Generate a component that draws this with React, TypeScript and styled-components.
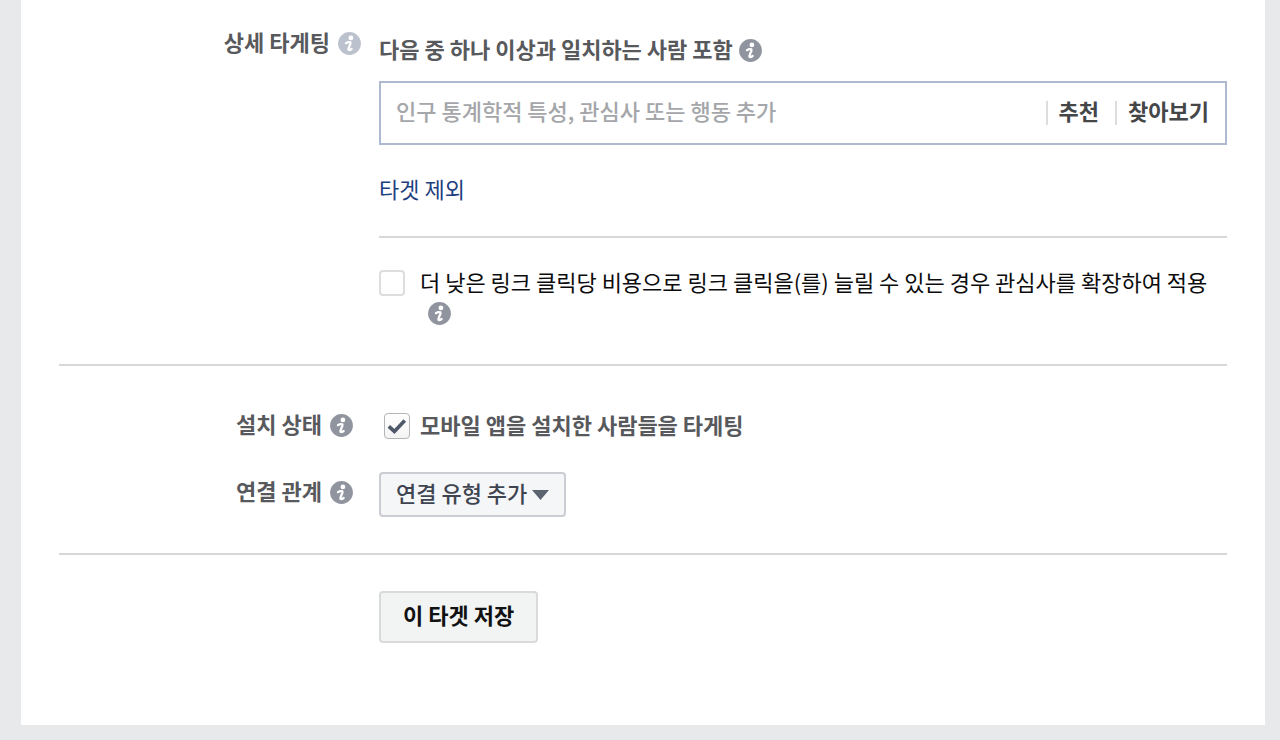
import React from "react";
import styled, { createGlobalStyle, css } from "styled-components";

const GlobalStyle = createGlobalStyle`
  * {
    box-sizing: border-box;
  }
  body {
    margin: 0;
    background: #e8e9eb;
    color: #58595c;
    font-family: "Noto Sans CJK KR", sans-serif;
    font-size: 22px;
    line-height: 30px;
  }
  button, input, select {
    font: inherit;
  }
`;

const Page = styled.div`
  padding: 0 15px 15px 21px;
`;

const Card = styled.form`
  padding: 28px 38px 82px;
  background: #fff;
`;

const Row = styled.div`
  display: grid;
  grid-template-columns: 302px minmax(0, 1fr);
  column-gap: 18px;
`;

const Section = styled.section`
  display: flex;
  flex-direction: column;
`;

const StatusSection = styled(Section)`
  gap: 31px;
  padding: 44px 0 36px;
`;

const RowLabel = styled.div<{ $inset?: boolean; $drop?: boolean }>`
  display: flex;
  justify-content: flex-end;
  align-items: center;
  align-self: start;
  gap: 8px;
  height: 30px;
  margin-top: ${(p) => (p.$drop ? "5px" : "0")};
  padding-right: ${(p) => (p.$inset ? "8px" : "0")};
  font-weight: 700;
`;

const Label = styled.label`
  display: block;
  padding-bottom: 4px;
  line-height: 26px;
`;

const Heading = styled.div`
  display: flex;
  align-items: center;
  gap: 6px;
  padding-top: 7px;
  font-weight: 700;
`;

const Divider = styled.hr`
  width: 100%;
  height: 2px;
  margin: 0;
  border: 0;
  background: #d6d7d9;
`;

const InfoButton = styled.button<{ $muted?: boolean }>`
  flex: none;
  display: inline-flex;
  padding: 0;
  border: 0;
  background: none;
  color: ${(p) => (p.$muted ? "#bcc2cd" : "#90949e")};
  cursor: pointer;
`;

const SearchBox = styled.div`
  display: flex;
  align-items: center;
  height: 64px;
  margin-top: 16px;
  padding: 0 5px 0 15px;
  border: 2px solid #adbad2;
`;

const SearchInput = styled.input`
  flex: 1;
  min-width: 0;
  padding: 0 0 6px;
  border: 0;
  outline: 0;
  background: none;
  font-weight: 500;
  &::placeholder {
    color: #a4a6aa;
    opacity: 1;
  }
`;

const SearchAction = styled.button`
  display: flex;
  align-items: center;
  padding: 0 16px 0 0;
  border: 0;
  background: none;
  color: #454648;
  font-weight: 700;
  cursor: pointer;
  &::before {
    content: "";
    width: 2px;
    height: 24px;
    margin-right: 11px;
    background: #dcdddf;
  }
  &:last-child {
    padding-right: 11px;
  }
`;

const ActionText = styled.span`
  padding-bottom: 6px;
`;

const ExcludeLink = styled.a`
  align-self: flex-start;
  margin: 28px 0 33px;
  color: #1d3f7f;
  text-decoration: none;
`;

const ExpandRow = styled.div`
  display: flex;
  align-items: flex-start;
  gap: 15px;
  padding: 30px 0 36px;
  color: #0c0c0d;
`;

const ExpandText = styled.div`
  display: flex;
  flex-direction: column;
  align-items: flex-start;
`;

const SecondLine = styled.div`
  display: flex;
  align-items: center;
  height: 30px;
  padding-left: 8px;
`;

const CheckWrap = styled.span`
  position: relative;
  display: flex;
  flex: none;
  margin-top: 2px;
`;

const Checkbox = styled.input<{ $raised?: boolean }>`
  appearance: none;
  width: 26px;
  height: 26px;
  margin: 0;
  border: 2px solid #dcdddf;
  border-radius: 4px;
  background: #fff;
  ${(p) =>
    p.$raised &&
    css`
      border: 1px solid #b4b5b8;
      background: linear-gradient(#fff, #f4f4f5);
    `}
`;

const CheckMark = styled.svg`
  position: absolute;
  inset: 0;
  pointer-events: none;
  display: none;
  input:checked + & {
    display: block;
  }
`;

const InstallRow = styled.div`
  display: flex;
  align-items: flex-start;
  gap: 10px;
  padding: 1px 0 0 5px;
  font-weight: 700;
`;

const SelectWrap = styled.span`
  position: relative;
  display: flex;
  justify-self: start;
`;

const Select = styled.select`
  appearance: none;
  width: 187px;
  height: 45px;
  padding: 0 30px 5px 15px;
  border: 2px solid #cbcdd3;
  border-radius: 4px;
  background: #f5f6f8;
  color: #3f4550;
  font-weight: 500;
  cursor: pointer;
`;

const Caret = styled.svg`
  position: absolute;
  right: 17px;
  top: 18px;
  pointer-events: none;
`;

const SaveButton = styled.button`
  justify-self: start;
  grid-column: 2;
  height: 52px;
  margin-top: 36px;
  padding: 0 22px 6px;
  border: 2px solid #d9dadb;
  border-radius: 4px;
  background: #f2f4f4;
  color: #111;
  font-weight: 700;
  cursor: pointer;
`;

function Info({ label, muted }: { label: string; muted?: boolean }) {
  return (
    <InfoButton type="button" aria-label={label} $muted={muted}>
      <svg width="23" height="23" viewBox="0 0 23 23" aria-hidden="true">
        <circle cx="11.5" cy="11.5" r="11.4" fill="currentColor" />
        <circle cx="12.9" cy="5.9" r="2.4" fill="#fff" />
        <path
          d="M8 11.2 Q10 9.6 12.4 10.3 Q13 11.6 11.4 14.2 Q10 17 10.6 18 Q11.8 18.4 13.6 17"
          fill="none"
          stroke="#fff"
          strokeWidth="2.3"
          strokeLinecap="round"
          strokeLinejoin="round"
        />
      </svg>
    </InfoButton>
  );
}

export default function App() {
  return (
    <>
      <GlobalStyle />
      <Page>
        <Card onSubmit={(e) => e.preventDefault()}>
          <Section>
            <Row>
              <RowLabel>
                <Label htmlFor="targeting">상세 타게팅</Label>
                <Info label="상세 타게팅 정보" muted />
              </RowLabel>
              <Section>
                <Heading>
                  <Label as="span">다음 중 하나 이상과 일치하는 사람 포함</Label>
                  <Info label="포함 조건 정보" />
                </Heading>
                <SearchBox>
                  <SearchInput
                    id="targeting"
                    type="text"
                    placeholder="인구 통계학적 특성, 관심사 또는 행동 추가"
                  />
                  <SearchAction type="button">
                    <ActionText>추천</ActionText>
                  </SearchAction>
                  <SearchAction type="button">
                    <ActionText>찾아보기</ActionText>
                  </SearchAction>
                </SearchBox>
                <ExcludeLink href="#exclude">타겟 제외</ExcludeLink>
                <Divider />
                <ExpandRow>
                  <CheckWrap>
                    <Checkbox id="expand" type="checkbox" />
                  </CheckWrap>
                  <ExpandText>
                    <Label htmlFor="expand">
                      더 낮은 링크 클릭당 비용으로 링크 클릭을(를) 늘릴 수 있는 경우 관심사를 확장하여 적용
                    </Label>
                    <SecondLine>
                      <Info label="관심사 확장 정보" />
                    </SecondLine>
                  </ExpandText>
                </ExpandRow>
              </Section>
            </Row>
          </Section>
          <Divider />
          <StatusSection>
            <Row>
              <RowLabel $inset>
                <Label as="span">설치 상태</Label>
                <Info label="설치 상태 정보" />
              </RowLabel>
              <InstallRow>
                <CheckWrap>
                  <Checkbox id="installed" type="checkbox" defaultChecked $raised />
                  <CheckMark width="26" height="26" viewBox="0 0 26 26" aria-hidden="true">
                    <path d="M4.8 13.4 L10.4 18.4 L20.8 7.4" fill="none" stroke="#4f5868" strokeWidth="3.6" />
                  </CheckMark>
                </CheckWrap>
                <Label htmlFor="installed">모바일 앱을 설치한 사람들을 타게팅</Label>
              </InstallRow>
            </Row>
            <Row>
              <RowLabel $inset $drop>
                <Label htmlFor="connection">연결 관계</Label>
                <Info label="연결 관계 정보" />
              </RowLabel>
              <SelectWrap>
                <Select id="connection">
                  <option>연결 유형 추가</option>
                </Select>
                <Caret width="17" height="10" viewBox="0 0 17 10" aria-hidden="true">
                  <path d="M0 0 H17 L8.5 10 Z" fill="#5b6270" />
                </Caret>
              </SelectWrap>
            </Row>
          </StatusSection>
          <Divider />
          <Row>
            <SaveButton type="submit">이 타겟 저장</SaveButton>
          </Row>
        </Card>
      </Page>
    </>
  );
}
